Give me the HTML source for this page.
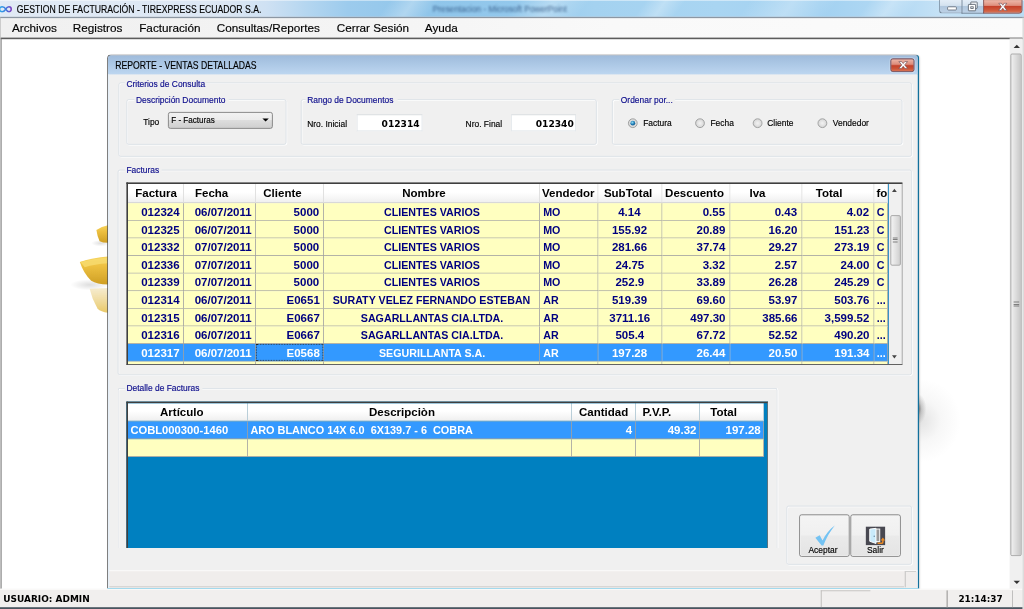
<!DOCTYPE html>
<html lang="es">
<head>
<meta charset="utf-8">
<title>GESTION DE FACTURACIÓN - TIREXPRESS ECUADOR S.A.</title>
<style>
html,body{margin:0;padding:0;background:#fff;overflow:hidden;}
body{width:1024px;height:609px;position:relative;}
#d{position:absolute;left:0;top:0;width:1280px;height:762px;transform:scale(0.8);transform-origin:0 0;background:#fff;overflow:hidden;
 font-family:"Liberation Sans",sans-serif;font-size:11px;color:#000;}
#d div,#d span,#d svg{position:absolute;box-sizing:border-box;white-space:nowrap;}
#tb{left:0;top:0;width:1280px;height:21px;overflow:hidden;background:linear-gradient(90deg,#e1eaf5 0,#dce7f4 22%,#cfe1f3 26%,#b4d6f0 30%,#9ccbed 34%,#8fc5ea 42%,#93c8ec 50%,#a4d2f0 58%,#a9d5f2 70%,#a2d1f1 80%,#b4daf4 88%,#c6e2f6 92%,#b9dcf4 100%);}
.stk{top:-6px;height:34px;transform:skewX(-35deg);background:linear-gradient(90deg,rgba(255,255,255,0) 0,rgba(255,255,255,.28) 50%,rgba(255,255,255,0) 100%);}
.cbt{top:-1px;height:18.3px;border:1px solid #6b7b8d;background:linear-gradient(180deg,#e3edf7 0,#d3e1ef 45%,#b1c7de 50%,#bdd1e6 100%);}

#tbl{left:0;top:21.25px;width:1280px;height:1.25px;background:#8c97a3;}
#ttl{left:21px;top:3.6px;font-size:12.8px;line-height:15px;color:#000;-webkit-text-stroke:.2px #000;transform:scaleX(0.845);transform-origin:0 0;}
#mb{left:0;top:22.5px;width:1280px;height:25px;background:linear-gradient(90deg,#f0f0f0 0,#f4f4f4 35%,#f9f9f9 60%,#fbfbfb 100%);}
#mbl{left:0;top:47.3px;width:1280px;height:1.5px;background:#5c5c5c;}
.mi{top:27px;font-size:14.67px;line-height:17px;color:#000;-webkit-text-stroke:.2px #000;}
#lb{left:0;top:22px;width:1.3px;height:740px;background:#c4c4c4;}
#lb2{left:1.2px;top:48px;width:1px;height:688px;background:#777;}
#w{left:134px;top:68px;width:1015px;height:668px;background:#f0f0f0;border-radius:5px 5px 0 0;border:1.2px solid #141414;border-right:2.2px solid #12709a;border-bottom:1.6px solid #29b6ea;border-top-color:#3c3e42;overflow:hidden;box-shadow:1px 1px 2px rgba(0,0,0,.15);}
#wt{left:0;top:0;width:1013px;height:24px;background:linear-gradient(180deg,#9fbbdb 0,#aac6e4 40%,#bdd6f0 100%);}
#wtt{left:9.25px;top:5.4px;font-size:13px;line-height:15px;-webkit-text-stroke:.2px #000;transform:scaleX(0.832);transform-origin:0 0;}
.gb{border:1px solid #d9dfe6;border-radius:3px;box-shadow:inset 1px 1px 0 #fff, 1px 1px 0 #fff;}
.gl{color:#0d0d8c;-webkit-text-stroke:.22px #0d0d8c;font-size:12.4px;line-height:16px;transform:scaleX(.85);transform-origin:0 0;}
.lb{font-size:12.4px;line-height:16px;color:#000;-webkit-text-stroke:.22px #000;transform:scaleX(.85);transform-origin:0 0;}
.tx{background:#fff;border:1px solid #e2e6ea;border-top-color:#d0d4d8;font-family:'DejaVu Sans',sans-serif;font-weight:bold;font-size:11.4px;line-height:23.5px;text-align:right;overflow:hidden;padding-right:2px;}
.rd{width:12.2px;height:12.2px;border-radius:50%;border:1px solid #8e8f8f;background:radial-gradient(circle at 50% 50%,#f4f4f4 0,#dcdcdc 60%,#c4c4c4 100%);}
.grid{border:2px solid #3f3f3f;border-right:1.3px solid #707070;border-bottom-width:1.5px;overflow:hidden;}
.gh{background:linear-gradient(180deg,#fff 0,#fff 45%,#efefef 100%);font-weight:bold;font-size:14.4px;line-height:22.5px;color:#000;border-right:1px solid #dcdcdc;border-bottom:1px solid #c8c8c8;top:0;overflow:hidden;}
.c{font-weight:bold;font-size:13.05px;line-height:24px;color:#000080;height:22px;background:#ffffc0;border-right:1px solid #a0a0a0;border-bottom:1px solid #a0a0a0;overflow:hidden;padding:0 5px 0 4.5px;}
.c i{font-style:normal;display:inline-block;transform:scaleX(1.103);transform-origin:0 50%;}
.c.r{text-align:right;} .c.m{text-align:center;} .c.l{text-align:left;padding-left:3.4px;}
.c.r i{transform-origin:100% 50%;} .c.m i{transform-origin:50% 50%;}
.c.t{font-size:12.9px;}
.c.t i{transform:scaleX(1.035);}
#g2 .c{padding-left:3.4px;font-size:12.7px;}
#g2 .c.t{font-size:12.9px;}
#g2 .c.t i{transform:scaleX(1.055);}
#g2 .c.r{font-size:13.05px;padding-right:3.2px;}
#g2 .c{line-height:24.8px;}
.sel{background:#3399ff;color:#fff;}
</style>
</head>
<body>
<div id="d">
<div id="tb"><div class="stk" style="left:480px;width:60px"></div><div class="stk" style="left:640px;width:90px"></div><div class="stk" style="left:800px;width:50px"></div><div class="stk" style="left:930px;width:110px"></div><div class="stk" style="left:1080px;width:60px"></div><div style="left:0;top:0;width:1280px;height:1.2px;background:rgba(255,255,255,.55)"></div><span style="left:541px;top:4px;font-size:11.5px;line-height:14px;color:#1c3f6e;filter:blur(1.3px);opacity:.75;transform:scaleX(.9);transform-origin:0 0">Presentacion - Microsoft PowerPoint</span></div><div id="tbl"></div>
<svg style="left:-0.5px;top:7.2px" width="15.3" height="9" viewBox="0 0 17 10"><defs><linearGradient id="ig" x1="0" x2="1" y1="0" y2="0"><stop offset="0" stop-color="#2aa8e8"/><stop offset=".5" stop-color="#3b7fe0"/><stop offset="1" stop-color="#7b3fc0"/></linearGradient></defs><path d="M8 5 C6.5 2.2 4.6 1.6 3 1.6 C1 1.6 -0.6 3 -0.6 5 C-0.6 7 1 8.4 3 8.4 C4.6 8.4 6.5 7.8 8 5 C9.5 2.2 11 1.6 12.4 1.6 C14.2 1.6 15.6 3 15.6 5 C15.6 7 14.2 8.4 12.4 8.4 C11 8.4 9.5 7.8 8 5 Z" fill="none" stroke="url(#ig)" stroke-width="2.1"/></svg>
<div class="cbt" style="left:1174px;width:29px;border-radius:0 0 0 4px;border-right:none"><span style="left:8.5px;top:8px;width:12px;height:5px;background:#fff;border:1px solid #5c6673;border-radius:1.5px"></span></div>
<div class="cbt" style="left:1202px;width:28px;border-right:none"><span style="left:10px;top:2px;width:9px;height:9px;background:#f4f7fb;border:1px solid #4f5966;border-radius:1px"></span><span style="left:7px;top:4.5px;width:9.5px;height:9.5px;background:#fff;border:1px solid #4f5966;border-radius:1px"></span><span style="left:10px;top:7.5px;width:3.5px;height:3.5px;border:1px solid #4f5966"></span></div>
<div class="cbt" style="left:1229px;width:48.5px;border-radius:0 0 4px 0;border-color:#7a3a36;background:linear-gradient(180deg,#eeb9ab 0,#dd8d7b 45%,#c5402a 50%,#cf5a3c 80%,#d9765a 100%)"><svg style="left:17px;top:3px" width="13" height="11" viewBox="0 0 13 11"><path d="M1.5 1 L4.6 1 L6.5 3.6 L8.4 1 L11.5 1 L8.2 5.4 L11.7 10 L8.5 10 L6.5 7.2 L4.5 10 L1.3 10 L4.8 5.4 Z" fill="#fff" stroke="#6b4a52" stroke-width=".8"/></svg></div>
<span id="ttl">GESTION DE FACTURACIÓN - TIREXPRESS ECUADOR S.A.</span>
<div id="mb"></div><div id="mbl"></div>
<span class="mi" style="left:15px">Archivos</span>
<span class="mi" style="left:91px">Registros</span>
<span class="mi" style="left:174px">Facturación</span>
<span class="mi" style="left:271px">Consultas/Reportes</span>
<span class="mi" style="left:421px">Cerrar Sesión</span>
<span class="mi" style="left:531px">Ayuda</span>
<div id="lb"></div><div id="lb2"></div>
<svg style="left:80px;top:270px" width="56" height="130" viewBox="80 270 56 130"><defs><linearGradient id="g1a" x1="0" y1="0" x2="0" y2="1"><stop offset="0" stop-color="#f6d35c"/><stop offset=".35" stop-color="#edc040"/><stop offset="1" stop-color="#cf9f24"/></linearGradient><linearGradient id="g1b" x1="0" y1="0" x2="0" y2="1"><stop offset="0" stop-color="#f3e6c0" stop-opacity=".75"/><stop offset="1" stop-color="#e6c255" stop-opacity=".9"/></linearGradient><radialGradient id="sh"><stop offset="0" stop-color="#000" stop-opacity=".13"/><stop offset="1" stop-color="#000" stop-opacity="0"/></radialGradient><filter id="bl"><feGaussianBlur stdDeviation="0.9"/></filter></defs><ellipse cx="112" cy="356" rx="24" ry="7" fill="url(#sh)"/><ellipse cx="126" cy="304" rx="12" ry="4" fill="url(#sh)"/><g filter="url(#bl)"><path d="M120.5 287.5 Q127 283 135 281.5 L135 303.5 Q128 303.5 124.5 301.5 Q121.5 295 120.5 287.5 Z" fill="url(#g1a)"/><path d="M99.8 327.5 Q116 322 135 320.5 L135 355.5 Q121 355.5 114 351 Q104 341 99.8 327.5 Z" fill="url(#g1a)"/><path d="M100.5 327.5 Q116 323.5 135 322 L135 329 Q118 330 106 334 Z" fill="#f8dc70" opacity=".8"/><path d="M112 361 L135 360 L135 391 Q126 390 122 386 Q115 374 112 361 Z" fill="url(#g1b)"/></g></svg>
<div style="left:1147px;top:490px;width:16px;height:44px;background:radial-gradient(ellipse 11px 19px at 0 21px,rgba(40,40,40,.62) 0,rgba(90,90,90,.28) 45%,rgba(120,120,120,0) 100%)"></div>
<div style="left:1147px;top:466px;width:64px;height:120px;background:radial-gradient(ellipse 50px 52px at 4px 60px,rgba(90,90,90,.17) 0,rgba(140,140,140,.07) 50%,rgba(160,160,160,0) 100%)"></div>
<div id="w">
<div id="wt"></div><span id="wtt">REPORTE - VENTAS DETALLADAS</span>
<div style="left:977.75px;top:3.75px;width:30.7px;height:16.8px;border:1px solid #6f3438;border-radius:3px;background:linear-gradient(180deg,#ecb6a8 0,#dc8a78 45%,#c23e28 50%,#cc5538 80%,#d87357 100%);box-shadow:0 0 0 1px rgba(255,255,255,.35)"><svg style="left:7.8px;top:2.2px" width="14" height="10.5" viewBox="0 0 13 11" preserveAspectRatio="none"><path d="M1.5 1 L4.6 1 L6.5 3.6 L8.4 1 L11.5 1 L8.2 5.4 L11.7 10 L8.5 10 L6.5 7.2 L4.5 10 L1.3 10 L4.8 5.4 Z" fill="#fff" stroke="#6b4a52" stroke-width=".8"/></svg></div>
<div class="gb" style="left:12.50px;top:34.12px;width:992.50px;height:92.88px;"></div>
<div style="left:20.50px;top:33.12px;width:101.25px;height:4px;background:#f0f0f0"></div>
<span class="gl" style="left:22.50px;top:27.62px;">Criterios de Consulta</span>
<div class="gb" style="left:22.50px;top:55.38px;width:200.00px;height:56.25px;"></div>
<div style="left:33.31px;top:54.38px;width:117.50px;height:4px;background:#f0f0f0"></div>
<span class="gl" style="left:35.31px;top:47.88px;">Descripción Documento</span>
<div class="gb" style="left:241.25px;top:55.38px;width:370.00px;height:56.25px;"></div>
<div style="left:247.38px;top:54.38px;width:114.38px;height:4px;background:#f0f0f0"></div>
<span class="gl" style="left:249.38px;top:47.88px;">Rango de Documentos</span>
<div class="gb" style="left:629.50px;top:55.38px;width:363.00px;height:56.25px;"></div>
<div style="left:638.50px;top:54.38px;width:70.00px;height:4px;background:#f0f0f0"></div>
<span class="gl" style="left:640.50px;top:47.88px;">Ordenar por...</span>
<span class="lb" style="left:43.75px;top:75.25px;">Tipo</span>
<div id="cb" style="left:75px;top:70.7px;width:131px;height:21px;border:1px solid #707070;border-radius:3px;background:linear-gradient(180deg,#f2f2f2 0,#ebebeb 50%,#dddddd 50%,#cfcfcf 100%);"><span class="lb" style="left:3px;top:1.5px;transform:scaleX(.815)">F - Facturas</span><span style="left:117px;top:7px;width:0;height:0;border-left:4px solid transparent;border-right:4px solid transparent;border-top:4.5px solid #000"></span></div>
<span class="lb" style="left:248.75px;top:77.56px;">Nro. Inicial</span>
<div class="tx" style="left:311px;top:74px;width:81.5px;height:21px">012314</div>
<span class="lb" style="left:446.88px;top:77.56px;">Nro. Final</span>
<div class="tx" style="left:503.75px;top:74px;width:81.5px;height:21px">012340</div>
<div class="rd" style="left:650.1px;top:78.65px"><span style="left:2px;top:2px;width:6.2px;height:6.2px;border-radius:50%;background:radial-gradient(circle at 40% 35%,#8fdcf5 0,#1a76b0 50%,#0a3560 100%)"></span></div>
<span class="lb" style="left:669.38px;top:76.31px;">Factura</span>
<div class="rd" style="left:734.1px;top:78.65px"></div>
<span class="lb" style="left:752.50px;top:76.31px;">Fecha</span>
<div class="rd" style="left:806.2px;top:78.65px"></div>
<span class="lb" style="left:824.38px;top:76.31px;">Cliente</span>
<div class="rd" style="left:886.7px;top:78.65px"></div>
<span class="lb" style="left:906.25px;top:76.31px;">Vendedor</span>
<div class="gb" style="left:12.00px;top:143.00px;width:993.00px;height:256.75px;"></div>
<div style="left:21.44px;top:142.00px;width:45.25px;height:4px;background:#f0f0f0"></div>
<span class="gl" style="left:23.44px;top:134.88px;">Facturas</span>
<div class="grid" id="g1" style="left:22.50px;top:159.40px;width:970.90px;height:227.20px;background:#f0f0f0;">
<div class="gh" style="left:0.00px;width:70.90px;height:23.7px;padding-left:9.59px">Factura</div>
<div class="gh" style="left:70.90px;width:90.00px;height:23.7px;padding-left:13.37px">Fecha</div>
<div class="gh" style="left:160.90px;width:85.00px;height:23.7px;padding-left:8.69px">Cliente</div>
<div class="gh" style="left:245.90px;width:270.00px;height:23.7px;padding-left:97.44px">Nombre</div>
<div class="gh" style="left:515.90px;width:72.50px;height:23.7px;padding-left:2.13px">Vendedor</div>
<div class="gh" style="left:588.40px;width:80.00px;height:23.7px;padding-left:7.00px">SubTotal</div>
<div class="gh" style="left:668.40px;width:85.00px;height:23.7px;padding-left:3.50px">Descuento</div>
<div class="gh" style="left:753.40px;width:90.00px;height:23.7px;padding-left:24.00px">Iva</div>
<div class="gh" style="left:843.40px;width:90.00px;height:23.7px;padding-left:16.81px">Total</div>
<div class="gh" style="left:933.40px;width:17.50px;height:23.7px;padding-left:2.75px">fo</div>
<div class="c r" style="left:0.00px;top:23.7px;width:70.90px"><i>012324</i></div>
<div class="c r" style="left:70.90px;top:23.7px;width:90.00px"><i>06/07/2011</i></div>
<div class="c r" style="left:160.90px;top:23.7px;width:85.00px"><i>5000</i></div>
<div class="c m t" style="left:245.90px;top:23.7px;width:270.00px"><i>CLIENTES VARIOS</i></div>
<div class="c l t" style="left:515.90px;top:23.7px;width:72.50px"><i>MO</i></div>
<div class="c m" style="left:588.40px;top:23.7px;width:80.00px"><i>4.14</i></div>
<div class="c r" style="left:668.40px;top:23.7px;width:85.00px"><i>0.55</i></div>
<div class="c r" style="left:753.40px;top:23.7px;width:90.00px"><i>0.43</i></div>
<div class="c r" style="left:843.40px;top:23.7px;width:90.00px"><i>4.02</i></div>
<div class="c l t" style="left:933.40px;top:23.7px;width:17.50px"><i>C</i></div>
<div class="c r" style="left:0.00px;top:45.7px;width:70.90px"><i>012325</i></div>
<div class="c r" style="left:70.90px;top:45.7px;width:90.00px"><i>06/07/2011</i></div>
<div class="c r" style="left:160.90px;top:45.7px;width:85.00px"><i>5000</i></div>
<div class="c m t" style="left:245.90px;top:45.7px;width:270.00px"><i>CLIENTES VARIOS</i></div>
<div class="c l t" style="left:515.90px;top:45.7px;width:72.50px"><i>MO</i></div>
<div class="c m" style="left:588.40px;top:45.7px;width:80.00px"><i>155.92</i></div>
<div class="c r" style="left:668.40px;top:45.7px;width:85.00px"><i>20.89</i></div>
<div class="c r" style="left:753.40px;top:45.7px;width:90.00px"><i>16.20</i></div>
<div class="c r" style="left:843.40px;top:45.7px;width:90.00px"><i>151.23</i></div>
<div class="c l t" style="left:933.40px;top:45.7px;width:17.50px"><i>C</i></div>
<div class="c r" style="left:0.00px;top:67.7px;width:70.90px"><i>012332</i></div>
<div class="c r" style="left:70.90px;top:67.7px;width:90.00px"><i>07/07/2011</i></div>
<div class="c r" style="left:160.90px;top:67.7px;width:85.00px"><i>5000</i></div>
<div class="c m t" style="left:245.90px;top:67.7px;width:270.00px"><i>CLIENTES VARIOS</i></div>
<div class="c l t" style="left:515.90px;top:67.7px;width:72.50px"><i>MO</i></div>
<div class="c m" style="left:588.40px;top:67.7px;width:80.00px"><i>281.66</i></div>
<div class="c r" style="left:668.40px;top:67.7px;width:85.00px"><i>37.74</i></div>
<div class="c r" style="left:753.40px;top:67.7px;width:90.00px"><i>29.27</i></div>
<div class="c r" style="left:843.40px;top:67.7px;width:90.00px"><i>273.19</i></div>
<div class="c l t" style="left:933.40px;top:67.7px;width:17.50px"><i>C</i></div>
<div class="c r" style="left:0.00px;top:89.7px;width:70.90px"><i>012336</i></div>
<div class="c r" style="left:70.90px;top:89.7px;width:90.00px"><i>07/07/2011</i></div>
<div class="c r" style="left:160.90px;top:89.7px;width:85.00px"><i>5000</i></div>
<div class="c m t" style="left:245.90px;top:89.7px;width:270.00px"><i>CLIENTES VARIOS</i></div>
<div class="c l t" style="left:515.90px;top:89.7px;width:72.50px"><i>MO</i></div>
<div class="c m" style="left:588.40px;top:89.7px;width:80.00px"><i>24.75</i></div>
<div class="c r" style="left:668.40px;top:89.7px;width:85.00px"><i>3.32</i></div>
<div class="c r" style="left:753.40px;top:89.7px;width:90.00px"><i>2.57</i></div>
<div class="c r" style="left:843.40px;top:89.7px;width:90.00px"><i>24.00</i></div>
<div class="c l t" style="left:933.40px;top:89.7px;width:17.50px"><i>C</i></div>
<div class="c r" style="left:0.00px;top:111.7px;width:70.90px"><i>012339</i></div>
<div class="c r" style="left:70.90px;top:111.7px;width:90.00px"><i>07/07/2011</i></div>
<div class="c r" style="left:160.90px;top:111.7px;width:85.00px"><i>5000</i></div>
<div class="c m t" style="left:245.90px;top:111.7px;width:270.00px"><i>CLIENTES VARIOS</i></div>
<div class="c l t" style="left:515.90px;top:111.7px;width:72.50px"><i>MO</i></div>
<div class="c m" style="left:588.40px;top:111.7px;width:80.00px"><i>252.9</i></div>
<div class="c r" style="left:668.40px;top:111.7px;width:85.00px"><i>33.89</i></div>
<div class="c r" style="left:753.40px;top:111.7px;width:90.00px"><i>26.28</i></div>
<div class="c r" style="left:843.40px;top:111.7px;width:90.00px"><i>245.29</i></div>
<div class="c l t" style="left:933.40px;top:111.7px;width:17.50px"><i>C</i></div>
<div class="c r" style="left:0.00px;top:133.7px;width:70.90px"><i>012314</i></div>
<div class="c r" style="left:70.90px;top:133.7px;width:90.00px"><i>06/07/2011</i></div>
<div class="c r" style="left:160.90px;top:133.7px;width:85.00px"><i>E0651</i></div>
<div class="c m t" style="left:245.90px;top:133.7px;width:270.00px"><i>SURATY VELEZ FERNANDO ESTEBAN</i></div>
<div class="c l t" style="left:515.90px;top:133.7px;width:72.50px"><i>AR</i></div>
<div class="c m" style="left:588.40px;top:133.7px;width:80.00px"><i>519.39</i></div>
<div class="c r" style="left:668.40px;top:133.7px;width:85.00px"><i>69.60</i></div>
<div class="c r" style="left:753.40px;top:133.7px;width:90.00px"><i>53.97</i></div>
<div class="c r" style="left:843.40px;top:133.7px;width:90.00px"><i>503.76</i></div>
<div class="c l t" style="left:933.40px;top:133.7px;width:17.50px"><i>...</i></div>
<div class="c r" style="left:0.00px;top:155.7px;width:70.90px"><i>012315</i></div>
<div class="c r" style="left:70.90px;top:155.7px;width:90.00px"><i>06/07/2011</i></div>
<div class="c r" style="left:160.90px;top:155.7px;width:85.00px"><i>E0667</i></div>
<div class="c m t" style="left:245.90px;top:155.7px;width:270.00px"><i>SAGARLLANTAS CIA.LTDA.</i></div>
<div class="c l t" style="left:515.90px;top:155.7px;width:72.50px"><i>AR</i></div>
<div class="c m" style="left:588.40px;top:155.7px;width:80.00px"><i>3711.16</i></div>
<div class="c r" style="left:668.40px;top:155.7px;width:85.00px"><i>497.30</i></div>
<div class="c r" style="left:753.40px;top:155.7px;width:90.00px"><i>385.66</i></div>
<div class="c r" style="left:843.40px;top:155.7px;width:90.00px"><i>3,599.52</i></div>
<div class="c l t" style="left:933.40px;top:155.7px;width:17.50px"><i>...</i></div>
<div class="c r" style="left:0.00px;top:177.7px;width:70.90px"><i>012316</i></div>
<div class="c r" style="left:70.90px;top:177.7px;width:90.00px"><i>06/07/2011</i></div>
<div class="c r" style="left:160.90px;top:177.7px;width:85.00px"><i>E0667</i></div>
<div class="c m t" style="left:245.90px;top:177.7px;width:270.00px"><i>SAGARLLANTAS CIA.LTDA.</i></div>
<div class="c l t" style="left:515.90px;top:177.7px;width:72.50px"><i>AR</i></div>
<div class="c m" style="left:588.40px;top:177.7px;width:80.00px"><i>505.4</i></div>
<div class="c r" style="left:668.40px;top:177.7px;width:85.00px"><i>67.72</i></div>
<div class="c r" style="left:753.40px;top:177.7px;width:90.00px"><i>52.52</i></div>
<div class="c r" style="left:843.40px;top:177.7px;width:90.00px"><i>490.20</i></div>
<div class="c l t" style="left:933.40px;top:177.7px;width:17.50px"><i>...</i></div>
<div class="c r sel" style="left:0.00px;top:199.7px;width:70.90px"><i>012317</i></div>
<div class="c r sel" style="left:70.90px;top:199.7px;width:90.00px"><i>06/07/2011</i></div>
<div class="c r sel" style="left:160.90px;top:199.7px;width:85.00px"><i>E0568</i></div>
<div class="c m sel t" style="left:245.90px;top:199.7px;width:270.00px"><i>SEGURILLANTA S.A.</i></div>
<div class="c l sel t" style="left:515.90px;top:199.7px;width:72.50px"><i>AR</i></div>
<div class="c m sel" style="left:588.40px;top:199.7px;width:80.00px"><i>197.28</i></div>
<div class="c r sel" style="left:668.40px;top:199.7px;width:85.00px"><i>26.44</i></div>
<div class="c r sel" style="left:753.40px;top:199.7px;width:90.00px"><i>20.50</i></div>
<div class="c r sel" style="left:843.40px;top:199.7px;width:90.00px"><i>191.34</i></div>
<div class="c l sel t" style="left:933.40px;top:199.7px;width:17.50px"><i>...</i></div>
<div class="c r" style="left:0.00px;top:221.7px;width:70.90px"></div>
<div class="c r" style="left:70.90px;top:221.7px;width:90.00px"></div>
<div class="c r" style="left:160.90px;top:221.7px;width:85.00px"></div>
<div class="c m t" style="left:245.90px;top:221.7px;width:270.00px"></div>
<div class="c l t" style="left:515.90px;top:221.7px;width:72.50px"></div>
<div class="c m" style="left:588.40px;top:221.7px;width:80.00px"></div>
<div class="c r" style="left:668.40px;top:221.7px;width:85.00px"></div>
<div class="c r" style="left:753.40px;top:221.7px;width:90.00px"></div>
<div class="c r" style="left:843.40px;top:221.7px;width:90.00px"></div>
<div class="c l t" style="left:933.40px;top:221.7px;width:17.50px"></div>
<div style="left:160.90px;top:199.7px;width:84.00px;height:21px;border:1px dotted #222"></div>
<div style="left:950.90px;top:0;width:18.5px;height:226px;background:#f0f0f0;border-left:1.2px solid #0a7dbd"></div>
<div style="left:953.90px;top:38.7px;width:12.5px;height:62.8px;border:1px solid #979797;border-radius:2px;background:linear-gradient(90deg,#f3f3f3 0,#e2e2e2 50%,#cfcfcf 100%)"></div>
<span style="left:955.90px;top:6px;width:0;height:0;border-left:3.5px solid transparent;border-right:3.5px solid transparent;border-bottom:4px solid #444"></span>
<span style="left:955.90px;top:214px;width:0;height:0;border-left:3.5px solid transparent;border-right:3.5px solid transparent;border-top:4px solid #444"></span>
<span style="left:956.90px;top:66.5px;width:6px;height:1px;background:#666"></span>
<span style="left:956.90px;top:69.0px;width:6px;height:1px;background:#666"></span>
<span style="left:956.90px;top:71.5px;width:6px;height:1px;background:#666"></span>
</div>
<div class="gb" style="left:12.00px;top:415.75px;width:825.25px;height:200.12px;border-bottom:none;box-shadow:inset 1px 1px 0 #fff,1px 0 0 #fff;border-radius:3px 3px 0 0;"></div>
<div style="left:21.44px;top:414.75px;width:96.25px;height:4px;background:#f0f0f0"></div>
<span class="gl" style="left:23.44px;top:407.75px;">Detalle de Facturas</span>
<div class="grid" id="g2" style="left:22.50px;top:433.40px;width:802.30px;height:182.50px;background:#0080c0;border-bottom:none;">
<div class="gh" style="left:0.00px;width:150.40px;height:22.2px;padding-left:40.52px">Artículo</div>
<div class="gh" style="left:150.40px;width:405.00px;height:22.2px;padding-left:151.38px">Descripciòn</div>
<div class="gh" style="left:555.40px;width:80.00px;height:22.2px;padding-left:8.88px">Cantidad</div>
<div class="gh" style="left:635.40px;width:80.00px;height:22.2px;padding-left:8.25px">P.V.P.</div>
<div class="gh" style="left:715.40px;width:80.00px;height:22.2px;padding-left:12.94px">Total</div>
<div class="c l sel" style="left:0.00px;top:22.2px;width:150.40px"><i>COBL000300-1460</i></div>
<div class="c l sel t" style="left:150.40px;top:22.2px;width:405.00px"><i>ARO BLANCO 14X 6.0&nbsp; 6X139.7 - 6&nbsp; COBRA</i></div>
<div class="c r sel" style="left:555.40px;top:22.2px;width:80.00px"><i>4</i></div>
<div class="c r sel" style="left:635.40px;top:22.2px;width:80.00px"><i>49.32</i></div>
<div class="c r sel" style="left:715.40px;top:22.2px;width:80.00px"><i>197.28</i></div>
<div class="c l" style="left:0.00px;top:44.2px;width:150.40px"></div>
<div class="c l t" style="left:150.40px;top:44.2px;width:405.00px"></div>
<div class="c r" style="left:555.40px;top:44.2px;width:80.00px"></div>
<div class="c r" style="left:635.40px;top:44.2px;width:80.00px"></div>
<div class="c r" style="left:715.40px;top:44.2px;width:80.00px"></div>
</div>
<div class="gb" style="left:848.4px;top:563px;width:156.6px;height:73.6px"></div>
<div style="left:863.75px;top:574px;width:63.5px;height:53px;border:1px solid #707070;border-radius:3px;background:linear-gradient(180deg,#f4f4f4 0,#f0f0f0 48%,#eaeaea 52%,#e4e4e4 100%);box-shadow:inset 0 0 0 1px #fbfbfb;"><span class="lb" style="left:-1.5px;width:100%;text-align:center;top:35px;transform-origin:50% 0">Aceptar</span><svg style="left:17px;top:11.5px" width="28" height="27" viewBox="0 0 28 27"><path d="M2.2 16.2 L7.6 13.2 L11.2 19.6 C14.5 12.5 20 5.5 26.5 1 C20.5 8.5 15.5 17 12.2 26 L10 26 Z" fill="#74c3f3"/></svg></div>
<div style="left:928px;top:574px;width:62.6px;height:53px;border:1px solid #707070;border-radius:3px;background:linear-gradient(180deg,#f4f4f4 0,#f0f0f0 48%,#eaeaea 52%,#e4e4e4 100%);box-shadow:inset 0 0 0 1px #fbfbfb;"><span class="lb" style="left:0;width:100%;text-align:center;top:35px;transform-origin:50% 0">Salir</span><svg style="left:18px;top:13.5px" width="25" height="24" viewBox="0 0 25 24"><rect x="0" y="0" width="24.5" height="23.5" fill="#484851"/><path d="M13 3.2 L17.6 3.2 L17.6 19 L13 19" fill="#9a9a9a" stroke="#ededed" stroke-width="1.4"/><path d="M5.2 3.4 L13 2.4 L13 21.4 L5.2 18.6 Z" fill="#c9ebfb" stroke="#fff" stroke-width="1.2"/><circle cx="10.8" cy="12.2" r=".9" fill="#6a8aa0"/><path d="M15 21 L20.2 21 Q21.6 21 21.6 19.6 L21.6 17" fill="none" stroke="#ea8a25" stroke-width="1.9"/><path d="M18.8 17.6 L21.6 13.8 L24.4 17.6 Z" fill="#ea8a25"/></svg></div>
<div style="left:0;top:644px;width:1013px;height:22px;background:#f0edec;border-top:1px solid #fff"></div>
<div style="left:995.6px;top:645px;width:14px;height:20px;background:#f0edec;border-left:1px solid #b8b8b8;border-top:1px solid #c8c8c8"></div>
<div style="left:0px;top:664px;width:995px;height:1px;background:#c9c7c6"></div>
<div style="left:0;top:24px;width:1012.6px;height:643px;box-shadow:inset 1.6px 0 0 #e6eff8,inset -1.8px 0 0 #d3e4f2"></div>
</div>
<div id="sb" style="left:0;top:736px;width:1280px;height:23.5px;background:#f1efee;border-top:1px solid #fff"></div>
<div style="left:0;top:759.4px;width:1280px;height:3px;background:#4a5660"></div>
<span id="usr" style="left:4.2px;top:742.9px;font-family:'DejaVu Sans',sans-serif;font-weight:bold;font-size:10.7px;line-height:13px;transform:scaleX(1.05);transform-origin:0 0">USUARIO: ADMIN</span>
<div style="left:1025.6px;top:738px;width:1.2px;height:21px;background:#b5b3b2"></div>
<div style="left:1183.4px;top:738px;width:1.2px;height:21px;background:#b5b3b2"></div>
<div style="left:1264.7px;top:738px;width:1.2px;height:21px;background:#b5b3b2"></div>
<div style="left:1026px;top:737.5px;width:62px;height:1.2px;background:#bdbbba"></div>
<span id="clk" style="left:1197.5px;top:742.9px;font-family:'DejaVu Sans',sans-serif;font-weight:bold;font-size:10.7px;line-height:13px;transform:scaleX(1.04);transform-origin:0 0">21:14:37</span>
<div style="left:1261.5px;top:48.3px;width:16.5px;height:688px;background:#f0f0f0"></div>
<div style="left:1278px;top:22px;width:2px;height:740px;background:#dcdcdc"></div>
<div style="left:1262.5px;top:67px;width:14.5px;height:628px;border:1px solid #9a9a9a;border-radius:2px;background:linear-gradient(90deg,#f0f0f0 0,#dedede 45%,#c6c6c6 100%)"></div>
<span style="left:1266.5px;top:55.5px;width:0;height:0;border-left:4px solid transparent;border-right:4px solid transparent;border-bottom:4.5px solid #333"></span>
<span style="left:1266.5px;top:725.5px;width:0;height:0;border-left:4px solid transparent;border-right:4px solid transparent;border-top:4.5px solid #333"></span>
<span style="left:1266.5px;top:377.0px;width:7px;height:1px;background:#666"></span>
<span style="left:1266.5px;top:379.5px;width:7px;height:1px;background:#666"></span>
<span style="left:1266.5px;top:382.0px;width:7px;height:1px;background:#666"></span>
</div>
</body>
</html>
